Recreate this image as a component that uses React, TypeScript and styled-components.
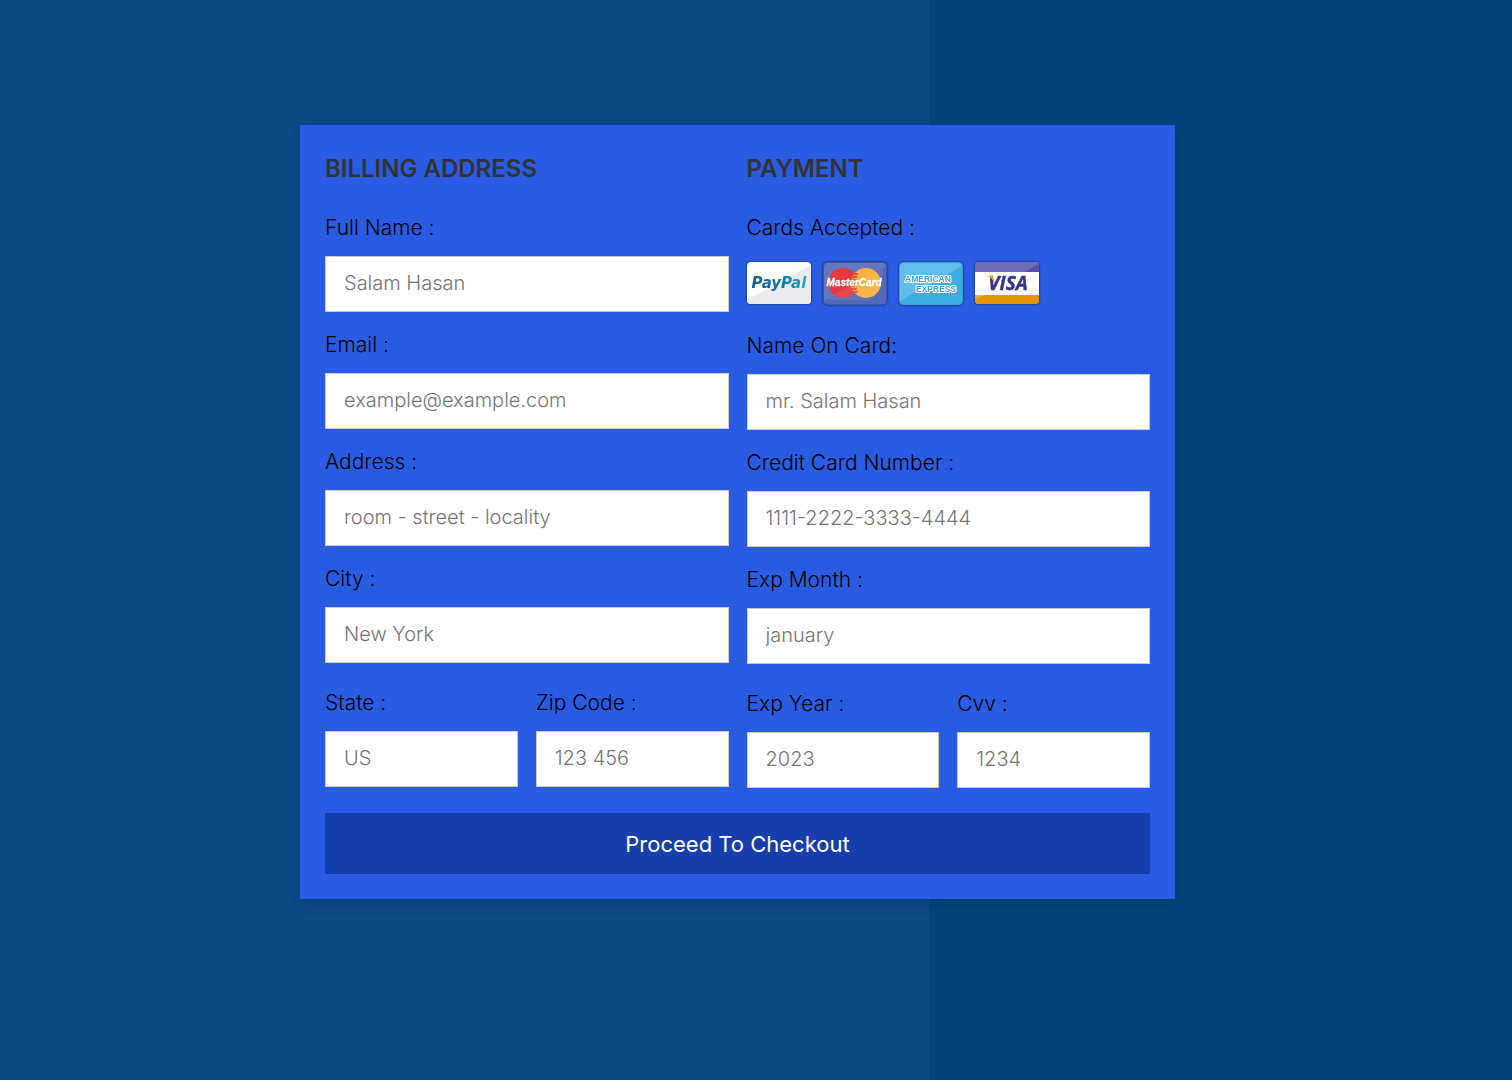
import React, { useId } from 'react';
import styled, { createGlobalStyle } from 'styled-components';

const GlobalStyle = createGlobalStyle`
  * { box-sizing: border-box; margin: 0; padding: 0; }
  body { font-family: Inter, "Open Sans", sans-serif; font-weight: 300; }
`;

const Page = styled.main`
  min-height: 100vh;
  display: flex;
  align-items: center;
  justify-content: center;
  padding: 0 37px 56px 0;
  background-color: #024579;
  background-image: linear-gradient(90deg, #0c4985 63%, #024579 63%);
  background-origin: content-box;
  background-repeat: repeat-y;
`;

const Form = styled.form`
  width: 875px;
  max-width: 100%;
  padding: 25px;
  background: #295ce3;
  box-shadow: 0 6px 12px rgba(0, 0, 0, 0.1);
`;

const Columns = styled.div`
  display: grid;
  grid-template-columns: repeat(auto-fit, minmax(312px, 1fr));
  gap: 18px;
`;

const Column = styled.section`
  display: flex;
  flex-direction: column;
  gap: 18px;
`;

const Heading = styled.h2`
  padding-bottom: 7px;
  color: #333;
  font-size: 24px;
  font-weight: 600;
  line-height: 38px;
  text-transform: uppercase;
`;

const Pair = styled.div`
  display: grid;
  grid-template-columns: 1fr 1fr;
  gap: 18px;
  padding-top: 7px;
`;

const FieldBox = styled.div`
  display: flex;
  flex-direction: column;
  gap: 13px;
  min-width: 0;
`;

const labelText = `
  color: #000;
  font-size: 21px;
  line-height: 30px;
`;

const Label = styled.label`${labelText}`;
const Caption = styled.p`${labelText}`;

const Input = styled.input`
  width: 100%;
  height: 56px;
  padding: 0 18px 2px;
  border: 1px solid #ccc;
  background: #fff;
  color: #000;
  font: inherit;
  font-size: 20px;
  &::placeholder { color: #757575; }
  &:focus { outline: 2px solid #153eac; }
`;

const CardList = styled.div`
  display: flex;
  align-items: center;
  gap: 12px;
  height: 57px;
  padding-bottom: 2px;
`;

const CardIcon = styled.svg`
  width: 64px;
  height: 43px;
  overflow: visible;
  filter: drop-shadow(0 0 1px rgba(0, 0, 0, 0.7));
`;

const Submit = styled.button`
  width: 100%;
  height: 61px;
  margin-top: 25px;
  border: 0;
  background: #163eac;
  color: #fff;
  font: inherit;
  font-size: 22px;
  font-weight: 400;
  cursor: pointer;
  &:hover { background: #12348f; }
`;

type FieldProps = { label: string; placeholder: string; type?: string };

function Field({ label, placeholder, type = 'text' }: FieldProps) {
  const id = useId();
  return (
    <FieldBox>
      <Label htmlFor={id}>{label}</Label>
      <Input id={id} type={type} placeholder={placeholder} />
    </FieldBox>
  );
}

const roundLogoFont = '"Open Sans", "Noto Sans", sans-serif';
const wideLogoFont = '"DejaVu Sans", Verdana, sans-serif';
const plainLogoFont = '"Liberation Sans", Arial, sans-serif';

function PayPal() {
  return (
    <CardIcon viewBox="0 0 64 43" role="img" aria-label="PayPal">
      <defs>
        <linearGradient id="pal" x1="0" x2="1">
          <stop offset="0" stopColor="#18618f" />
          <stop offset="0.55" stopColor="#16749f" />
          <stop offset="1" stopColor="#25aac8" />
        </linearGradient>
      </defs>
      <rect width="64" height="42" rx="4" fill="#fdfdfd" />
      <path d="M0 38 64 3V38a4 4 0 0 1-4 4H4a4 4 0 0 1-4-4z" fill="#ebebed" />
      <text x="32" y="26" textAnchor="middle" fontFamily={wideLogoFont} fontSize="15" fontWeight="700" fontStyle="italic" fill="url(#pal)">PayPal</text>
    </CardIcon>
  );
}

function MasterCard() {
  return (
    <CardIcon viewBox="0 0 64 43" role="img" aria-label="MasterCard">
      <rect x="0.5" y="0.5" width="63" height="42" rx="4" fill="#6277c0" stroke="#4054a4" />
      <path d="M1 39 63 4v34a4 4 0 0 1-4 4H4a3 3 0 0 1-3-3z" fill="#5268b8" />
      <circle cx="20" cy="21" r="15" fill="#e7383d" />
      <circle cx="43" cy="21" r="15" fill="#fbb03b" />
      <path d="M29 12h6M28 15h6M28 18h6M28 21h6M28 24h6M28 27h6M29 30h6" stroke="#e7383d" strokeWidth="1.5" />
      <path d="M3 37 60 6C59 25 53 38 43 38H12z" fill="#fff" opacity="0.07" />
      <text x="31" y="24" textAnchor="middle" fontFamily={plainLogoFont} fontSize="10" fontWeight="700" fontStyle="italic" fill="#fff" stroke="#fff" strokeWidth="0.3">MasterCard</text>
    </CardIcon>
  );
}

function Amex() {
  return (
    <CardIcon viewBox="0 0 64 43" role="img" aria-label="American Express">
      <rect x="0.5" y="0.5" width="63" height="42" rx="4" fill="#63bce7" stroke="#3b9fd2" />
      <path d="M1 39 63 4v34a4 4 0 0 1-4 4H4a3 3 0 0 1-3-3z" fill="#3aaee0" />
      <g fontFamily={plainLogoFont} fontSize="9" fontWeight="700" fill="#39a5da" stroke="#fff" strokeWidth="2" paintOrder="stroke" strokeLinejoin="round">
        <text x="6" y="20" fontSize="8.5">AMERICAN</text>
        <text x="17" y="30" fontSize="8.5">EXPRESS</text>
      </g>
    </CardIcon>
  );
}

function Visa() {
  return (
    <CardIcon viewBox="0 0 64 43" role="img" aria-label="Visa">
      <rect width="64" height="42" rx="4" fill="#fff" />
      <path d="M0 10V4a4 4 0 0 1 4-4h56a4 4 0 0 1 4 4v6z" fill="#5352a5" />
      <path d="M0 10V4a4 4 0 0 1 4-4h56a4 4 0 0 1 3 2L50 10z" fill="#6d6cb7" />
      <path d="M0 33h64v5a4 4 0 0 1-4 4H4a4 4 0 0 1-4-4z" fill="#e49600" />
      <path d="M0 38 9 33H0z" fill="#ecab36" />
      <text x="33" y="28" textAnchor="middle" fontFamily={roundLogoFont} fontSize="19" fontWeight="700" fontStyle="italic" fill="#34348c" stroke="#34348c" strokeWidth="0.4">VISA</text>
      <path d="M12 14h5c2 1 2 4 3 8-2-4-4-7-8-8z" fill="#f0a818" />
    </CardIcon>
  );
}

export default function App() {
  return (
    <>
      <GlobalStyle />
      <Page>
        <Form onSubmit={(event) => event.preventDefault()}>
          <Columns>
            <Column>
              <Heading>Billing Address</Heading>
              <Field label="Full Name :" placeholder="Salam Hasan" />
              <Field label="Email :" placeholder="example@example.com" type="email" />
              <Field label="Address :" placeholder="room - street - locality" />
              <Field label="City :" placeholder="New York" />
              <Pair>
                <Field label="State :" placeholder="US" />
                <Field label="Zip Code :" placeholder="123 456" />
              </Pair>
            </Column>
            <Column>
              <Heading>Payment</Heading>
              <FieldBox>
                <Caption>Cards Accepted :</Caption>
                <CardList>
                  <PayPal />
                  <MasterCard />
                  <Amex />
                  <Visa />
                </CardList>
              </FieldBox>
              <Field label="Name On Card:" placeholder="mr. Salam Hasan" />
              <Field label="Credit Card Number :" placeholder="1111-2222-3333-4444" />
              <Field label="Exp Month :" placeholder="january" />
              <Pair>
                <Field label="Exp Year :" placeholder="2023" />
                <Field label="Cvv :" placeholder="1234" />
              </Pair>
            </Column>
          </Columns>
          <Submit type="submit">Proceed To Checkout</Submit>
        </Form>
      </Page>
    </>
  );
}
